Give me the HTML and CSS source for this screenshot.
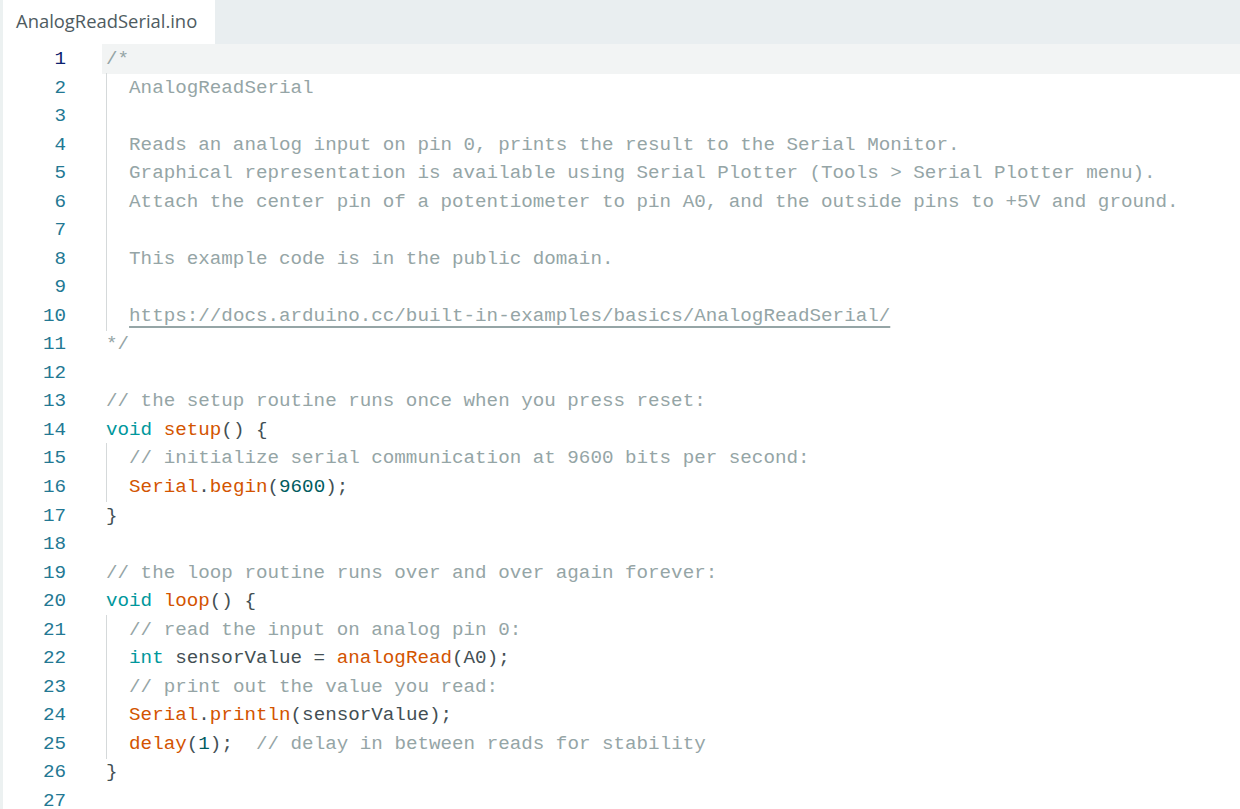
FILE: index.html
```html
<!DOCTYPE html>
<html>
<head>
<meta charset="utf-8">
<link rel="stylesheet" href="styles.css">
<title>AnalogReadSerial.ino</title>
</head>
<body>
<div class="app">
  <div class="rail"></div>
  <div class="main">
    <div class="tabs">
      <div class="tab">AnalogReadSerial.ino</div>
    </div>
    <div class="editor">
      <div class="row active"><div class="ln">1</div><div class="code"><span class="c">/*</span></div></div>
      <div class="row"><div class="ln">2</div><div class="code ind"><span class="c">  AnalogReadSerial</span></div></div>
      <div class="row"><div class="ln">3</div><div class="code ind"></div></div>
      <div class="row"><div class="ln">4</div><div class="code ind"><span class="c">  Reads an analog input on pin 0, prints the result to the Serial Monitor.</span></div></div>
      <div class="row"><div class="ln">5</div><div class="code ind"><span class="c">  Graphical representation is available using Serial Plotter (Tools &gt; Serial Plotter menu).</span></div></div>
      <div class="row"><div class="ln">6</div><div class="code ind"><span class="c">  Attach the center pin of a potentiometer to pin A0, and the outside pins to +5V and ground.</span></div></div>
      <div class="row"><div class="ln">7</div><div class="code ind"></div></div>
      <div class="row"><div class="ln">8</div><div class="code ind"><span class="c">  This example code is in the public domain.</span></div></div>
      <div class="row"><div class="ln">9</div><div class="code ind"></div></div>
      <div class="row"><div class="ln">10</div><div class="code ind"><span class="c">  <span class="link">https://docs.arduino.cc/built-in-examples/basics/AnalogReadSerial/</span></span></div></div>
      <div class="row"><div class="ln">11</div><div class="code"><span class="c">*/</span></div></div>
      <div class="row"><div class="ln">12</div><div class="code"></div></div>
      <div class="row"><div class="ln">13</div><div class="code"><span class="c">// the setup routine runs once when you press reset:</span></div></div>
      <div class="row"><div class="ln">14</div><div class="code"><span class="k">void</span> <span class="f">setup</span>() {</div></div>
      <div class="row"><div class="ln">15</div><div class="code ind">  <span class="c">// initialize serial communication at 9600 bits per second:</span></div></div>
      <div class="row"><div class="ln">16</div><div class="code ind">  <span class="f">Serial</span>.<span class="f">begin</span>(<span class="n">9600</span>);</div></div>
      <div class="row"><div class="ln">17</div><div class="code">}</div></div>
      <div class="row"><div class="ln">18</div><div class="code"></div></div>
      <div class="row"><div class="ln">19</div><div class="code"><span class="c">// the loop routine runs over and over again forever:</span></div></div>
      <div class="row"><div class="ln">20</div><div class="code"><span class="k">void</span> <span class="f">loop</span>() {</div></div>
      <div class="row"><div class="ln">21</div><div class="code ind">  <span class="c">// read the input on analog pin 0:</span></div></div>
      <div class="row"><div class="ln">22</div><div class="code ind">  <span class="k">int</span> sensorValue = <span class="f">analogRead</span>(A0);</div></div>
      <div class="row"><div class="ln">23</div><div class="code ind">  <span class="c">// print out the value you read:</span></div></div>
      <div class="row"><div class="ln">24</div><div class="code ind">  <span class="f">Serial</span>.<span class="f">println</span>(sensorValue);</div></div>
      <div class="row"><div class="ln">25</div><div class="code ind">  <span class="f">delay</span>(<span class="n">1</span>);  <span class="c">// delay in between reads for stability</span></div></div>
      <div class="row"><div class="ln">26</div><div class="code">}</div></div>
      <div class="row"><div class="ln">27</div><div class="code"></div></div>
    </div>
  </div>
</div>
</body>
</html>
```
FILE: styles.css
```css
html, body {
  margin: 0;
  padding: 0;
  background: #ffffff;
  height: 100%;
  overflow: hidden;
}

.app {
  display: flex;
  height: 809px;
}

.rail {
  width: 3px;
  flex: none;
  background: #ecf1f1;
}

.main {
  flex: 1;
  display: flex;
  flex-direction: column;
  min-width: 0;
}

.tabs {
  height: 44px;
  flex: none;
  display: flex;
  background: #e9eef0;
}

.tab {
  width: 199px;
  padding-left: 13px;
  background: #ffffff;
  font-family: "Open Sans", "Noto Sans", sans-serif;
  font-size: 18.4px;
  color: #4e5b61;
  line-height: 42px;
  white-space: nowrap;
}

.editor {
  font-family: "Liberation Mono", "DejaVu Sans Mono", monospace;
  font-size: 19.23px;
  color: #434f54;
}

.row {
  display: grid;
  grid-template-columns: 63px 1fr;
  column-gap: 36px;
  height: 28.54px;
  line-height: 30px;
}

.ln {
  text-align: right;
  color: #237893;
}

.row.active .ln {
  color: #0b216f;
}

.row.active .code {
  background: #f2f4f4;
}

.code {
  padding-left: 4px;
  white-space: pre;
}

.code.ind {
  background: linear-gradient(#d5d9da, #d5d9da) no-repeat 4px 0 / 1px 100%;
}

.c { color: #95a5a6; }
.k { color: #00979c; }
.f { color: #d35400; }
.n { color: #005c5f; }

.link {
  text-decoration: underline;
  text-decoration-thickness: 2px;
  text-underline-offset: 5px;
  text-decoration-color: #95a5a6;
}
```
